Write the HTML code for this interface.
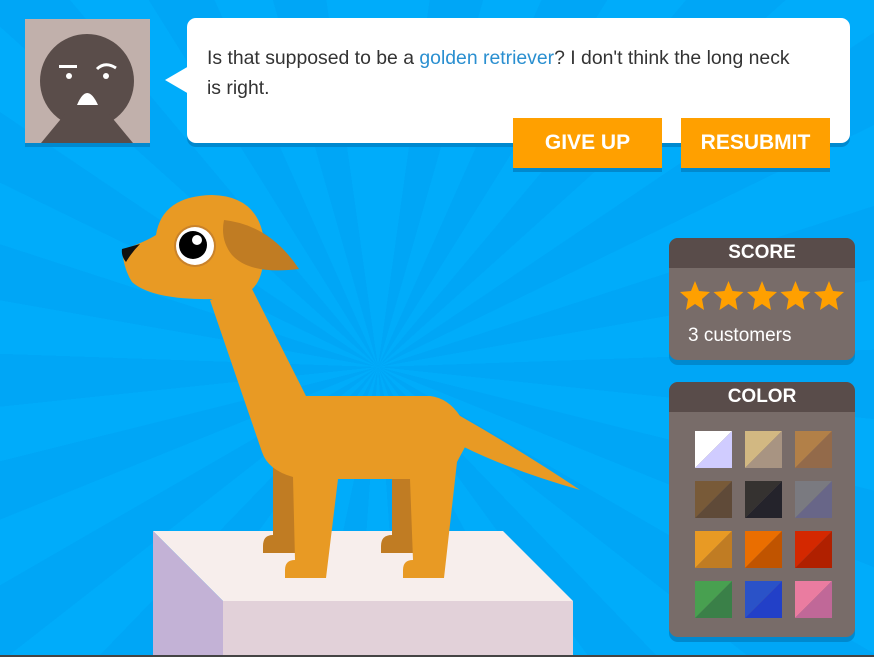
<!DOCTYPE html>
<html><head><meta charset="utf-8"><style>
*{margin:0;padding:0;box-sizing:border-box}
body{width:874px;height:657px;overflow:hidden;position:relative;font-family:"Liberation Sans",Arial,sans-serif;
background:repeating-conic-gradient(from 0deg at 378px 367px,#00acfa 0deg 8deg,#00a6f6 8deg 16deg);}
.abs{position:absolute}
.avatar{left:25px;top:19px;width:125px;height:124px;background:#c1b0ab;box-shadow:0 4px 0 #0089cf;overflow:hidden}
.bubble{left:187px;top:18px;width:663px;height:125px;background:#fff;border-radius:9px;box-shadow:0 4px 0 #0089cf}
.bubble p{position:absolute;left:20px;top:25px;width:630px;font-size:19.4px;line-height:30px;color:#333;white-space:nowrap}
.bubble a{color:#2a8fd0;text-decoration:none}
.tail{left:165px;top:66px;width:0;height:0;border-top:14px solid transparent;border-bottom:14px solid transparent;border-right:24px solid #fff}
.btn{top:118px;width:149px;height:50px;background:#ffa000;color:#fff;font-weight:bold;font-size:21px;text-align:center;line-height:50px;box-shadow:0 4px 0 #0089cf}
.panel{left:669px;width:186px;background:#786c69;border-radius:9px;overflow:hidden;box-shadow:0 5px 0 #0089cf}
.panel .h{height:30px;background:#594c4a;color:#fff;font-weight:bold;font-size:19px;text-align:center;line-height:30px}
</style></head><body>
<div class="abs avatar">
<svg width="125" height="124" viewBox="0 0 125 124">
<circle cx="62" cy="62" r="47" fill="#5a4d4a"/>
<polygon points="16,124 40,95 84,95 108,124" fill="#5a4d4a"/>
<rect x="34" y="46" width="18" height="3" fill="#fff"/>
<path d="M72 50 Q80 42 91 49" stroke="#fff" stroke-width="3" fill="none"/>
<circle cx="44" cy="57" r="3" fill="#fff"/>
<circle cx="81" cy="57" r="3" fill="#fff"/>
<path d="M52 86 Q62 62 73 86 Z" fill="#fff"/>
</svg></div>
<div class="abs tail"></div>
<div class="abs bubble"><p>Is that supposed to be a <a>golden retriever</a>? I don't think the long neck<br>is right.</p></div>
<div class="abs btn" style="left:513px">GIVE UP</div>
<div class="abs btn" style="left:681px">RESUBMIT</div>

<svg class="abs" style="left:0;top:0" width="874" height="657" viewBox="0 0 874 657">
<polygon points="153,531 503,531 573,601 223,601" fill="#f7eeec"/>
<polygon points="153,531 223,601 223,657 153,657" fill="#c3b2d6"/>
<polygon points="223,601 573,601 573,657 223,657" fill="#e2d1d9"/>
<rect x="0" y="655" width="874" height="2" fill="#444"/>
<path d="M273 460 L293 460 L300 553 L263 553 L263 546 Q263 535 273 535 Z" fill="#c07c23"/>
<path d="M392 460 L410 460 L418 553 L381 553 L381 546 Q381 535 392 535 Z" fill="#c07c23"/>
<path d="M455 413 Q520 450 580 490 Q510 470 462 446 Z" fill="#e89a24"/>
<path d="M250 285 L306 396 L430 396 Q448 398 460 416 L465 447 L457 462 L444 578 L403 578 L403 570 Q403 560 413 560 L410 479 L338 479 L326 578 L285 578 L285 570 Q285 560 295 560 L293 477 Q268 470 262 452 L210 300 Z" fill="#e89a24"/>
<path d="M122 250 Q145 242 156 235 Q162 196 212 195 Q258 196 264 240 Q266 282 248 292 Q230 300 200 299 Q150 298 132 282 Q124 270 122 250 Z" fill="#e89a24"/>
<path d="M122 249 L140 244 Q132 252 126 262 Q121 256 122 249 Z" fill="#111"/>
<path d="M224 220 Q270 225 299 269 Q250 275 232 255 Q220 240 224 220 Z" fill="#c07c23"/>
<circle cx="195" cy="246" r="21" fill="#c9822a"/>
<circle cx="195" cy="246" r="19" fill="#fff"/>
<circle cx="193" cy="245" r="14" fill="#000"/>
<circle cx="197" cy="240" r="5" fill="#fff"/>
</svg>

<div class="abs panel" style="top:238px;height:122px"><div class="h">SCORE</div>
<svg class="abs" style="left:10px;top:42px" width="170" height="32" viewBox="0 0 170 32">
<g fill="#ffa000">
<polygon id="s" points="16,1 20,11 31,12 23,19 25,30 16,24 7,30 9,19 1,12 12,11"/>
<use href="#s" x="33.5"/><use href="#s" x="67"/><use href="#s" x="100.5"/><use href="#s" x="134"/>
</g></svg>
<div class="abs" style="left:19px;top:87px;color:#fff;font-size:19px">3 customers</div>
</div>

<div class="abs panel" style="top:382px;height:255px"><div class="h">COLOR</div>
<svg class="abs" style="left:0;top:0" width="186" height="255">
<polygon points="26,49 63,49 26,86" fill="#ffffff"/><polygon points="63,49 63,86 26,86" fill="#d0ccff"/>
<polygon points="76,49 113,49 76,86" fill="#d2b882"/><polygon points="113,49 113,86 76,86" fill="#a89482"/>
<polygon points="126,49 163,49 126,86" fill="#b28048"/><polygon points="163,49 163,86 126,86" fill="#936a4a"/>
<polygon points="26,99 63,99 26,136" fill="#785a38"/><polygon points="63,99 63,136 26,136" fill="#5f4a38"/>
<polygon points="76,99 113,99 76,136" fill="#353230"/><polygon points="113,99 113,136 76,136" fill="#24232b"/>
<polygon points="126,99 163,99 126,136" fill="#7a7a80"/><polygon points="163,99 163,136 126,136" fill="#686688"/>
<polygon points="26,149 63,149 26,186" fill="#e89a24"/><polygon points="63,149 63,186 26,186" fill="#c07c23"/>
<polygon points="76,149 113,149 76,186" fill="#ea6e00"/><polygon points="113,149 113,186 76,186" fill="#c05400"/>
<polygon points="126,149 163,149 126,186" fill="#d42800"/><polygon points="163,149 163,186 126,186" fill="#b02000"/>
<polygon points="26,199 63,199 26,236" fill="#48a050"/><polygon points="63,199 63,236 26,236" fill="#3a8048"/>
<polygon points="76,199 113,199 76,236" fill="#2a52c8"/><polygon points="113,199 113,236 76,236" fill="#2240c8"/>
<polygon points="126,199 163,199 126,236" fill="#ea7ca0"/><polygon points="163,199 163,236 126,236" fill="#c06898"/>
</svg>
</div>
</body></html>
